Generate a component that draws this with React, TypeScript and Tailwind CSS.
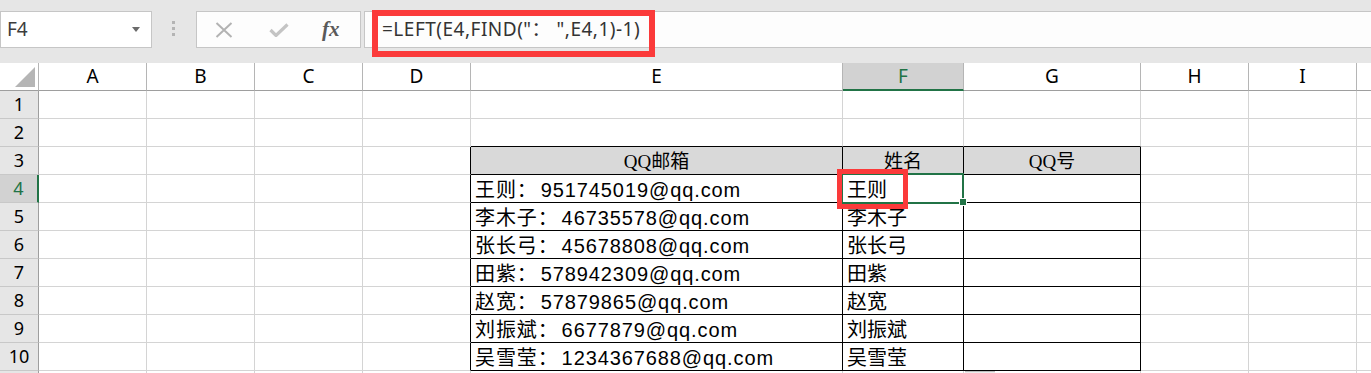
import React from "react";

const cols = [
  { key: "A", w: "w-[108px]" },
  { key: "B", w: "w-[108px]" },
  { key: "C", w: "w-[108px]" },
  { key: "D", w: "w-[108px]" },
  { key: "E", w: "w-[372px]" },
  { key: "F", w: "w-[121px]" },
  { key: "G", w: "w-[177px]" },
  { key: "H", w: "w-[108px]" },
  { key: "I", w: "w-[108px]" },
];

const people = [
  { name: "王则", qq: "951745019" },
  { name: "李木子", qq: "46735578" },
  { name: "张长弓", qq: "45678808" },
  { name: "田紫", qq: "578942309" },
  { name: "赵宽", qq: "57879865" },
  { name: "刘振斌", qq: "6677879" },
  { name: "吴雪莹", qq: "1234367688" },
];

const inTable = (row: number, key: string) =>
  row >= 3 && row <= 10 && (key === "E" || key === "F" || key === "G");

function Toolbar() {
  return (
    <div className="relative h-[63px] bg-[#e6e6e6]">
      <div className="flex items-start pt-[11px]">
        {/* name box */}
        <div className="flex h-[37px] w-[152px] shrink-0 items-center justify-between border border-[#c6c6c6] bg-white pl-[6px] pr-[11px]">
          <span className="font-['Noto_Sans',sans-serif] text-[19px] leading-none text-[#3c3c3c]">F4</span>
          <svg width="8" height="5" viewBox="0 0 8 5">
            <path d="M0 0h8L4 5z" fill="#6b6b6b" />
          </svg>
        </div>
        {/* splitter dots */}
        <div className="ml-[20px] mt-[10px] flex w-[3px] flex-col gap-[3px]">
          <span className="h-[3px] w-[3px] bg-[#b4b4b4]" />
          <span className="h-[3px] w-[3px] bg-[#b4b4b4]" />
          <span className="h-[3px] w-[3px] bg-[#b4b4b4]" />
        </div>
        {/* cancel / enter / fx */}
        <div className="ml-[21px] flex h-[37px] w-[165px] shrink-0 items-center border border-[#c6c6c6] bg-[#fdfdfd]">
          <svg className="ml-[18px]" width="18" height="16" viewBox="0 0 18 16">
            <path d="M1.5 1l15 14M16.5 1l-15 14" stroke="#b3b3b3" strokeWidth="2" fill="none" />
          </svg>
          <svg className="ml-[36px]" width="20" height="14" viewBox="0 0 20 14">
            <path d="M1.5 7l5.5 5.5L18.5 1.5" stroke="#c4c4c4" strokeWidth="3.2" fill="none" />
          </svg>
          <span className="ml-[33px] font-['Liberation_Serif',serif] text-[21px] font-bold italic leading-none text-[#5a5a5a]">
            fx
          </span>
        </div>
        {/* formula input */}
        <div className="ml-[3px] flex h-[37px] flex-1 items-center border border-r-0 border-[#c6c6c6] bg-[#fdfdfd] pl-[17px]">
          <span className="font-['Noto_Sans','Noto_Sans_CJK_SC',sans-serif] text-[19px] leading-none tracking-[0.5px] text-[#333]">
            =LEFT(E4,FIND("： ",E4,1)-1)
          </span>
        </div>
      </div>
      {/* annotation box */}
      <div className="absolute left-[372px] top-[10px] h-[47px] w-[283px] border-[6px] border-[#fb3a3a]" />
    </div>
  );
}

function HeaderRow() {
  return (
    <div className="flex h-[28px]">
      <div className="flex w-[39px] shrink-0 items-end justify-end border-b border-r border-b-[#9e9e9e] border-r-[#b5b5b5] pb-[3px] pr-[3px]">
        <svg width="20" height="20" viewBox="0 0 20 20">
          <path d="M20 0V20H0z" fill="#b5b5b5" />
        </svg>
      </div>
      {cols.map((c) =>
        c.key === "F" ? (
          <div
            key={c.key}
            className={`${c.w} flex shrink-0 items-center justify-center border-b-2 border-r border-b-[#217346] border-r-[#b5b5b5] bg-[#d2d2d2] pt-[1px] font-['Noto_Sans',sans-serif] text-[19px] text-[#217346]`}
          >
            {c.key}
          </div>
        ) : (
          <div
            key={c.key}
            className={`${c.w} flex shrink-0 items-center justify-center border-b border-r border-b-[#9e9e9e] border-r-[#b5b5b5] font-['Noto_Sans',sans-serif] text-[19px] text-black`}
          >
            {c.key}
          </div>
        )
      )}
      <div className="flex-1 border-b border-b-[#9e9e9e]" />
    </div>
  );
}

function cellBody(row: number, key: string) {
  if (row === 3) {
    const label = key === "E" ? "QQ邮箱" : key === "F" ? "姓名" : key === "G" ? "QQ号" : "";
    if (!label) return null;
    return (
      <div className="pt-[1px] text-center font-['Liberation_Serif','Noto_Sans_CJK_SC',serif] text-[19px] leading-[27px] text-black">
        {label}
      </div>
    );
  }
  const p = people[row - 4];
  if (!p) return null;
  if (key === "E") {
    return (
      <div className="whitespace-nowrap pl-1 pt-[2px] font-['Liberation_Sans','Noto_Sans_CJK_SC',sans-serif] text-[20px] leading-[27px] tracking-[0.9px] text-black">
        {p.name}：<span className="ml-[3px]">{p.qq}@qq.com</span>
      </div>
    );
  }
  if (key === "F") {
    return (
      <div className="whitespace-nowrap pl-1 pt-[2px] font-['Liberation_Sans','Noto_Sans_CJK_SC',sans-serif] text-[20px] leading-[27px] text-black">
        {p.name}
      </div>
    );
  }
  return null;
}

function GridRow({ row }: { row: number }) {
  const selected = row === 4;
  return (
    <div className="flex h-[28px] shrink-0">
      <div
        className={`flex w-[39px] shrink-0 items-center justify-center border-b border-b-[#c8c8c8] font-['Noto_Sans',sans-serif] text-[18px] ${
          selected
            ? "border-r-2 border-r-[#217346] bg-[#d2d2d2] text-[#217346]"
            : "border-r border-r-[#9e9e9e] bg-[#e6e6e6] text-black"
        }`}
      >
        {row <= 10 ? row : null}
      </div>
      {cols.map((c) => {
        const rightBlack = row >= 3 && row <= 10 && (c.key === "D" || inTable(row, c.key));
        const bottomBlack = row >= 2 && row <= 10 && (c.key === "E" || c.key === "F" || c.key === "G");
        return (
          <div
            key={c.key}
            className={`relative ${c.w} shrink-0 border-b border-r ${
              rightBlack ? "border-r-black" : "border-r-[#d4d4d4]"
            } ${bottomBlack ? "border-b-black" : "border-b-[#d4d4d4]"} ${
              row === 3 && inTable(row, c.key) ? "bg-[#d9d9d9]" : "bg-white"
            }`}
          >
            {cellBody(row, c.key)}
            {selected && c.key === "F" && (
              <>
                <div className="absolute -left-[2px] -top-[2px] z-10 h-[31px] w-[123px] border-2 border-[#217346]" />
                <div className="absolute left-[116px] top-[23px] z-10 h-[8px] w-[8px] border border-white bg-[#217346]" />
                <div className="absolute -left-[6px] -top-[6px] z-20 h-[40px] w-[71px] border-[5px] border-[#fb3a3a]" />
              </>
            )}
            {row === 11 && c.key === "G" && (
              <div className="ml-[1px] h-[2px] w-[30px] border-t border-[#bdbdbd] bg-[#ececec]" />
            )}
          </div>
        );
      })}
      <div className="flex-1 border-b border-b-[#d4d4d4] bg-white" />
    </div>
  );
}

export default function App() {
  const rows = [1, 2, 3, 4, 5, 6, 7, 8, 9, 10, 11];
  return (
    <div className="h-[373px] w-[1371px] overflow-hidden bg-white">
      <Toolbar />
      <HeaderRow />
      {rows.map((r) => (
        <GridRow key={r} row={r} />
      ))}
    </div>
  );
}
